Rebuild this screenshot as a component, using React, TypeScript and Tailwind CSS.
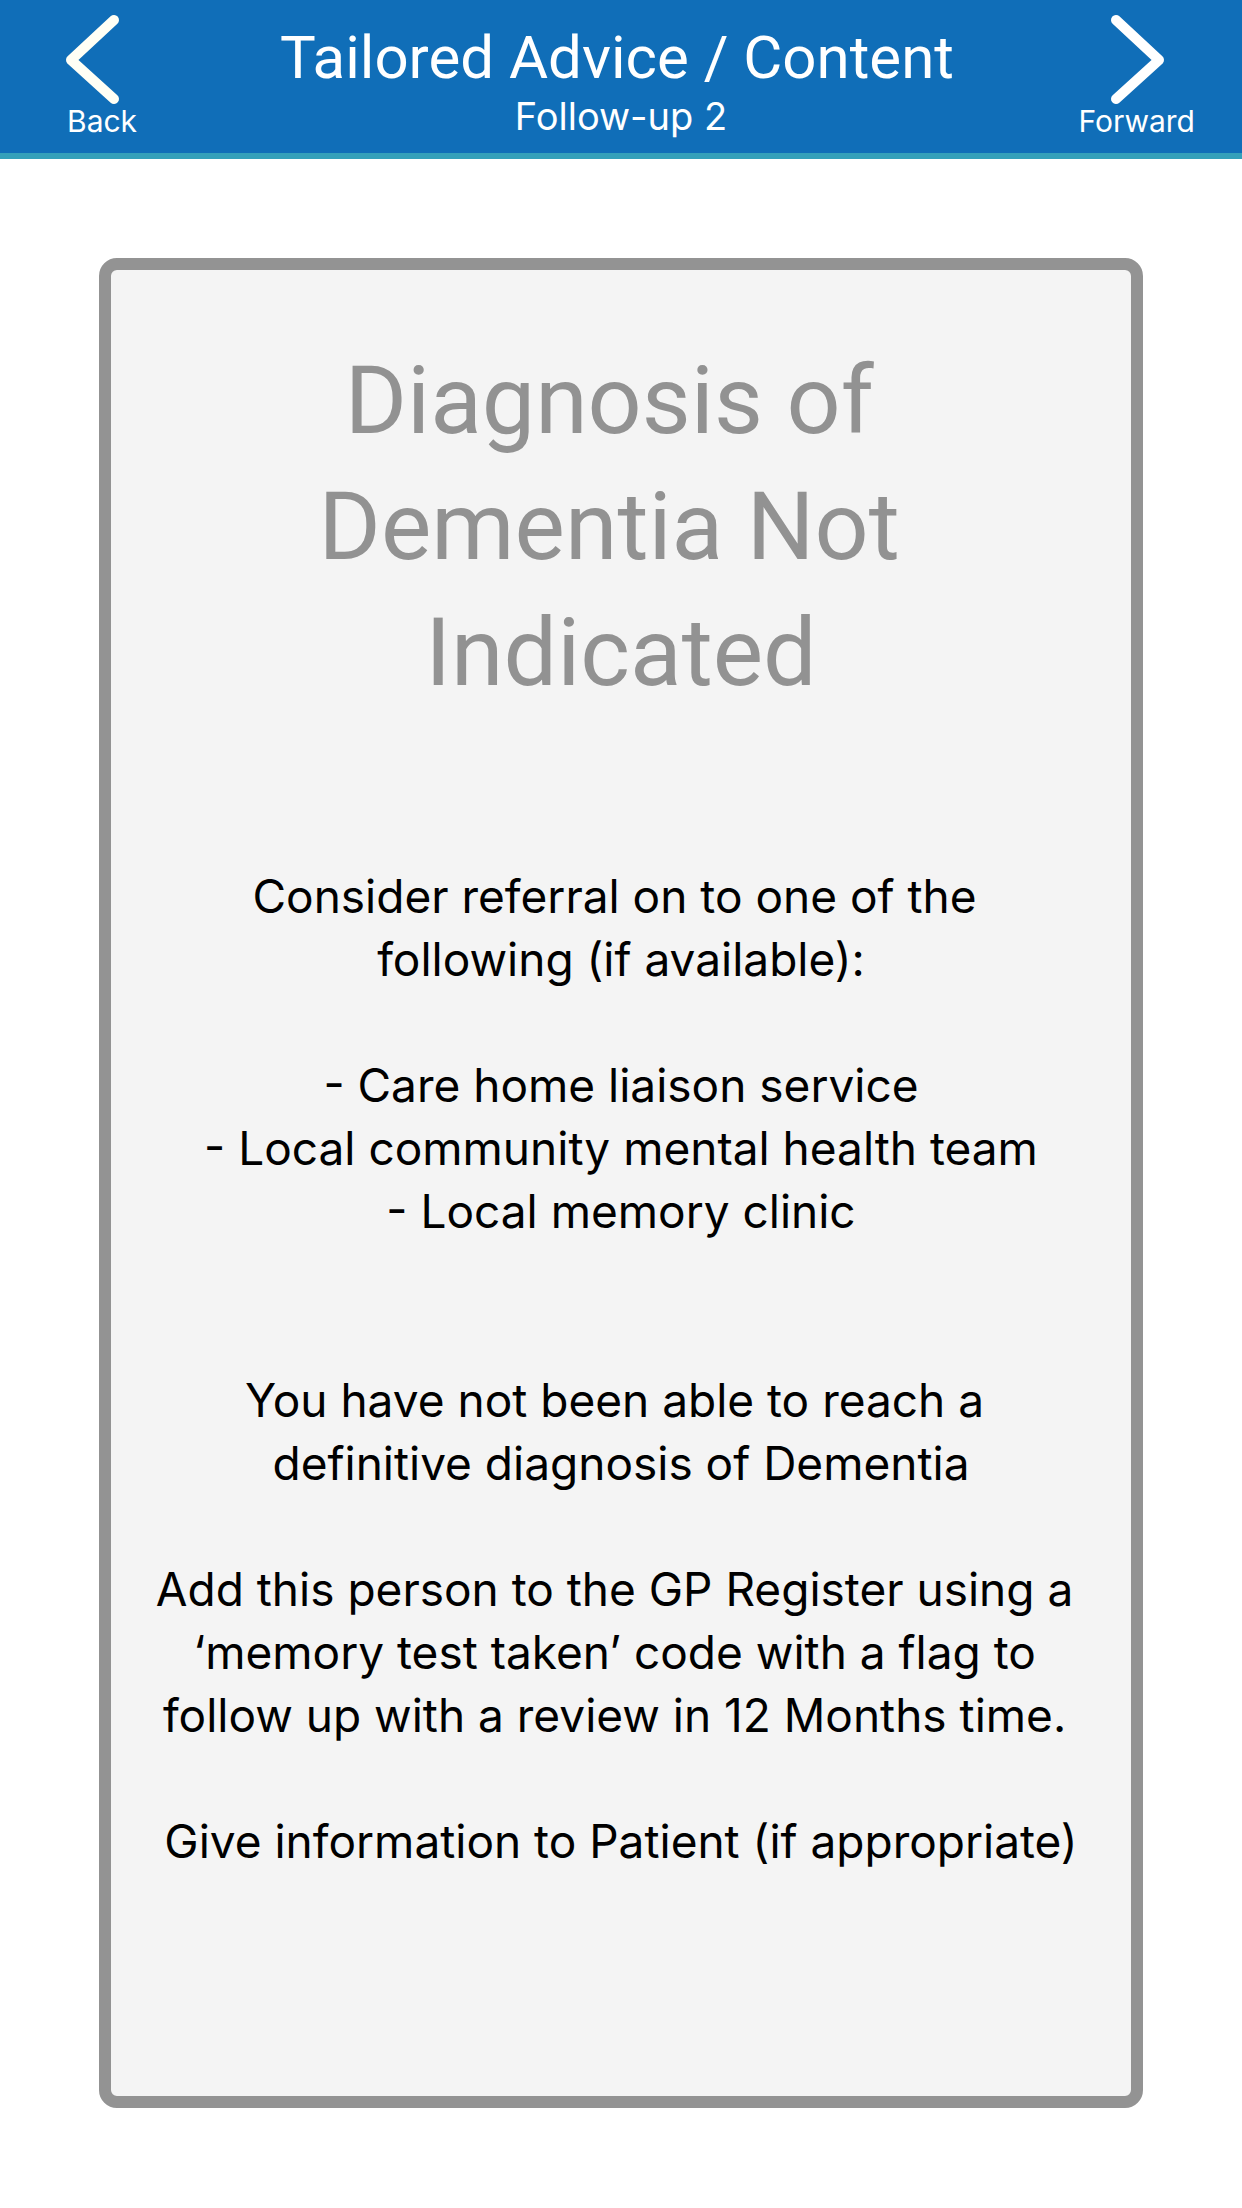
import React from "react";

const bodyLines: string[] = [
  "Consider referral on to one of the ",
  "following (if available):",
  "",
  "- Care home liaison service",
  "- Local community mental health team",
  "- Local memory clinic",
  "",
  "",
  "You have not been able to reach a ",
  "definitive diagnosis of Dementia",
  "",
  "Add this person to the GP Register using a ",
  "‘memory test taken’ code with a flag to ",
  "follow up with a review in 12 Months time. ",
  "",
  "Give information to Patient (if appropriate)",
];

function Chevron({ dir }: { dir: "left" | "right" }) {
  return (
    <svg width="64" height="108" viewBox="0 0 64 108" className="block">
      <polyline
        points={dir === "left" ? "52,20 9,60 52,99" : "12,20 55,60 12,99"}
        fill="none"
        stroke={dir === "left" ? "#FFFFF5" : "#FFFFFF"}
        strokeWidth="10"
        strokeLinecap="round"
        strokeLinejoin="round"
      />
    </svg>
  );
}

export default function App() {
  return (
    <div
      className="w-[1242px] min-h-[2208px] bg-white"
      style={{ fontFamily: "Inter, Roboto, 'Noto Sans', sans-serif" }}
    >
      <header className="h-[153px] bg-[#106EB8] grid grid-cols-[220px_1fr_220px] text-white">
        <div className="flex flex-col items-start pl-[62px]">
          <Chevron dir="left" />
          <span className="text-[30px] leading-[30px] mt-[-2px] pl-[5px]">Back</span>
        </div>
        <div className="flex flex-col items-center pt-[28px]">
          <span
            className="text-[60px] leading-[60px] whitespace-nowrap pr-[8px]"
            style={{ fontFamily: "Roboto, 'Noto Sans', sans-serif" }}
          >
            Tailored Advice / Content
          </span>
          <span className="text-[38px] leading-[38px] mt-[9px] whitespace-nowrap">Follow-up 2</span>
        </div>
        <div className="flex flex-col items-end pr-[47px]">
          <div className="pr-[27px]">
            <Chevron dir="right" />
          </div>
          <span className="text-[30px] leading-[30px] mt-[-2px]">Forward</span>
        </div>
      </header>
      <div className="h-[6px] bg-[#34A0BA]" />
      <main className="px-[99px] pt-[99px] pb-[100px]">
        <section className="h-[1850px] border-[12px] border-[#939393] rounded-[18px] bg-[#F4F4F4] flex flex-col items-center">
          <h1
            className="pt-[68px] text-[95px] leading-[126px] text-[#929292] text-center font-normal whitespace-pre"
            style={{ fontFamily: "Roboto, 'Noto Sans', sans-serif" }}
          >
            <div>{"Diagnosis of "}</div>
            <div>{"Dementia Not "}</div>
            <div>{"Indicated"}</div>
          </h1>
          <div className="mt-[149px] text-[46px] leading-[63px] text-black text-center">
            {bodyLines.map((l, i) => (
              <div key={i} className="whitespace-pre h-[63px]">
                {l}
              </div>
            ))}
          </div>
        </section>
      </main>
    </div>
  );
}
